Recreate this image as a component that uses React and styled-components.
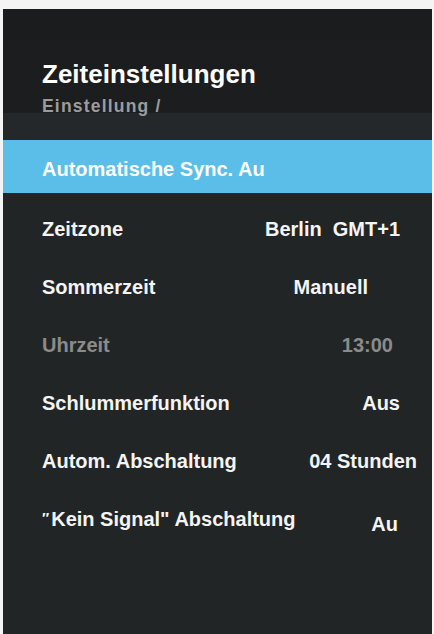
import React from 'react'
import styled, { createGlobalStyle } from 'styled-components'

const GlobalStyle = createGlobalStyle`
  html, body {
    margin: 0;
    padding: 0;
    background: #f4f4f4;
  }
  body {
    font-family: "Liberation Sans", Arial, sans-serif;
    font-weight: 700;
  }
`

const Panel = styled.div`
  margin: 9px 2px 0 3px;
  height: 625px;
  background: #222526;
  overflow: hidden;
`

const Header = styled.header`
  height: 131px;
  box-sizing: border-box;
  padding: 50px 0 0 39px;
  background: linear-gradient(
    to bottom,
    #1b1c1d 0,
    #1c1d1f 104px,
    #25282a 104px,
    #25282a 131px
  );
`

const Title = styled.h1`
  margin: 0;
  font-size: 26px;
  line-height: 30px;
  font-weight: 700;
  color: #ffffff;
`

const Crumb = styled.div`
  margin-top: 7px;
  font-size: 17.5px;
  line-height: 21px;
  letter-spacing: 1.2px;
  color: #9c9c9c;
`

const Highlight = styled.div`
  height: 53px;
  box-sizing: border-box;
  padding: 6px 0 0 39px;
  display: flex;
  align-items: center;
  background: #5bbee9;
  color: #ffffff;
  font-size: 20px;
`

const List = styled.div`
  margin-top: 7px;
  display: flex;
  flex-direction: column;
`

const Row = styled.div`
  height: 58px;
  display: flex;
  align-items: center;
  justify-content: space-between;
  padding: 0 ${(p) => p.$right}px 0 39px;
  font-size: 20px;
  color: ${(p) => (p.$disabled ? '#8b8b8b' : '#f4f4f4')};
`

const Label = styled.span`
  white-space: nowrap;
`

const Quote = styled.span`
  font-size: 15px;
  vertical-align: 3px;
  margin-right: 2px;
`

const Value = styled.span`
  white-space: nowrap;
  padding-top: ${(p) => p.$drop || 0}px;
`

const rows = [
  { label: 'Zeitzone', value: 'Berlin\u00a0 GMT+1', right: 32 },
  { label: 'Sommerzeit', value: 'Manuell', right: 64 },
  { label: 'Uhrzeit', value: '13:00', right: 39, disabled: true },
  { label: 'Schlummerfunktion', value: 'Aus', right: 32 },
  { label: 'Autom. Abschaltung', value: '04 Stunden', right: 15 },
  { label: 'Kein Signal" Abschaltung', value: 'Au', right: 34, drop: 10, quote: true },
]

export default function App() {
  return (
    <>
      <GlobalStyle />
      <Panel>
        <Header>
          <Title>Zeiteinstellungen</Title>
          <Crumb>Einstellung /</Crumb>
        </Header>
        <Highlight>Automatische Sync. Au</Highlight>
        <List>
          {rows.map((r) => (
            <Row key={r.label} $right={r.right} $disabled={r.disabled}>
              <Label>
                {r.quote && <Quote>{'\u2033'}</Quote>}
                {r.label}
              </Label>
              <Value $drop={r.drop}>{r.value}</Value>
            </Row>
          ))}
        </List>
      </Panel>
    </>
  )
}
